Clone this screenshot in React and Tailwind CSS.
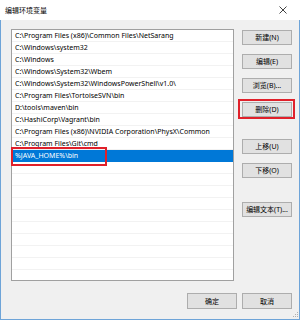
import React from "react";

const rows = [
  "C:\\Program Files (x86)\\Common Files\\NetSarang",
  "C:\\Windows\\system32",
  "C:\\Windows",
  "C:\\Windows\\System32\\Wbem",
  "C:\\Windows\\System32\\WindowsPowerShell\\v1.0\\",
  "C:\\Program Files\\TortoiseSVN\\bin",
  "D:\\tools\\maven\\bin",
  "C:\\HashiCorp\\Vagrant\\bin",
  "C:\\Program Files (x86)\\NVIDIA Corporation\\PhysX\\Common",
  "C:\\Program Files\\Git\\cmd",
  "%JAVA_HOME%\\bin",
];

const font = { fontFamily: '"Noto Sans", "Noto Sans CJK SC", sans-serif' };

function Btn({ children, className = "" }) {
  return (
    <div
      className={
        "h-[15px] w-[50px] flex items-center justify-center bg-[#e1e1e1] border border-[#adadad] text-[7px] leading-none text-black whitespace-nowrap " +
        className
      }
    >
      {children}
    </div>
  );
}

export default function App() {
  const all = [...rows];
  while (all.length < 21) all.push("");
  return (
    <div
      className="relative w-[300px] h-[320px] flex flex-col bg-[#f0f0f0] overflow-hidden"
      style={font}
    >
      <div className="h-[20px] bg-white flex items-center justify-between pl-[5px] pr-[13px] shrink-0">
        <span className="text-[7px] leading-none text-black">编辑环境变量</span>
        <svg width="8" height="8" viewBox="0 0 8 8">
          <path d="M0.5 0.5 L7.5 7.5 M7.5 0.5 L0.5 7.5" stroke="#111" strokeWidth="0.8" fill="none" />
        </svg>
      </div>
      <div className="flex-1 flex flex-col border-l border-r border-b border-[#6ea4d8] border-t-0">
        <div className="flex pt-[9px] pl-[10px]">
          <div className="w-[223px] h-[252px] bg-white border border-[#a0a0a0] overflow-hidden">
            {all.map((r, i) => (
              <div
                key={i}
                className={
                  "h-[12px] border-b flex items-center pl-[3px] text-[7px] leading-none whitespace-nowrap " +
                  (i === 10
                    ? "bg-[#0078d7] text-white border-[#0078d7]"
                    : "text-black border-[#f2f2f2]")
                }
              >
                {r}
              </div>
            ))}
          </div>
          <div className="ml-[8px] pt-[1px] flex flex-col">
            <Btn>新建(N)</Btn>
            <Btn className="mt-[9px]">编辑(E)</Btn>
            <Btn className="mt-[9px]">浏览(B)...</Btn>
            <Btn className="mt-[9px]">删除(D)</Btn>
            <Btn className="mt-[22px]">上移(U)</Btn>
            <Btn className="mt-[9px]">下移(O)</Btn>
            <Btn className="mt-[24px]">编辑文本(T)...</Btn>
          </div>
        </div>
        <div className="flex justify-end pr-[7px] mt-[12px] gap-[5px]">
          <Btn className="w-[49px] h-[16px] border-[#0078d7]">确定</Btn>
          <Btn className="h-[16px]">取消</Btn>
        </div>
      </div>
      <div className="absolute left-[11px] top-[147px] w-[96px] h-[19px] border-2 border-[#e0202a]" />
      <div className="absolute left-[238px] top-[99px] w-[57px] h-[20px] border-2 border-[#e0202a]" />
      <svg className="absolute right-[2px] bottom-[3px]" width="5" height="5" viewBox="0 0 5 5">
        <rect x="4" y="0" width="1" height="1" fill="#b0b0b0" />
        <rect x="2" y="2" width="1" height="1" fill="#b0b0b0" />
        <rect x="4" y="2" width="1" height="1" fill="#b0b0b0" />
        <rect x="0" y="4" width="1" height="1" fill="#b0b0b0" />
        <rect x="2" y="4" width="1" height="1" fill="#b0b0b0" />
        <rect x="4" y="4" width="1" height="1" fill="#b0b0b0" />
      </svg>
    </div>
  );
}
